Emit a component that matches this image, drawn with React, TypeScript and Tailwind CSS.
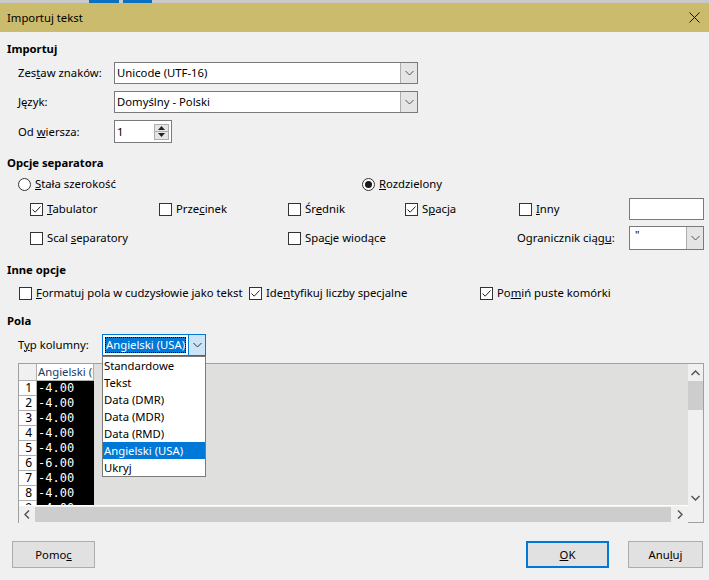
import React from "react";

function Check({ checked }: { checked?: boolean }) {
  return (
    <span className="w-[13px] h-[13px] shrink-0 border border-[#333333] bg-white flex items-center justify-center">
      {checked && (
        <svg width="11" height="11" viewBox="0 0 11 11">
          <path d="M1.5 5.5 L4.2 8.2 L9.5 2.5" stroke="#222" strokeWidth="1" fill="none" />
        </svg>
      )}
    </span>
  );
}

function Radio({ checked }: { checked?: boolean }) {
  return (
    <span className="w-[13px] h-[13px] shrink-0 rounded-full border border-[#333333] bg-white flex items-center justify-center">
      {checked && <span className="w-[7px] h-[7px] rounded-full bg-[#1a1a1a]" />}
    </span>
  );
}

function Chevron({ color = "#555" }: { color?: string }) {
  return (
    <svg width="9" height="6" viewBox="0 0 9 6">
      <path d="M0.5 1 L4.5 5 L8.5 1" stroke={color} strokeWidth="1" fill="none" />
    </svg>
  );
}

function Combo({ text, width }: { text: string; width: string }) {
  return (
    <div className={`${width} h-[22px] flex border border-[#7a7a7a] bg-white`}>
      <div className="flex-1 flex items-center pl-[2px] text-black">{text}</div>
      <div className="w-[17px] bg-[#e5e5e5] border-l border-[#adadad] flex items-center justify-center">
        <Chevron />
      </div>
    </div>
  );
}

function Item({ children, checked, className = "" }: { children: React.ReactNode; checked?: boolean; className?: string }) {
  return (
    <div className={`flex items-center gap-[4px] ${className}`}>
      <Check checked={checked} />
      <span>{children}</span>
    </div>
  );
}

function Button({ children, w, primary }: { children: React.ReactNode; w: string; primary?: boolean }) {
  return (
    <div
      className={`${w} h-[27px] flex items-center justify-center bg-[#e1e1e1] ${
        primary ? "border-2 border-[#0078d7]" : "border border-[#adadad]"
      }`}
    >
      {children}
    </div>
  );
}

const rows = ["-4.00", "-4.00", "-4.00", "-4.00", "-4.00", "-6.00", "-4.00", "-4.00", "-4.00"];
const types = ["Standardowe", "Tekst", "Data (DMR)", "Data (MDR)", "Data (RMD)", "Angielski (USA)", "Ukryj"];

export default function App() {
  return (
    <div className="relative w-[709px] h-[580px] overflow-hidden whitespace-nowrap bg-[#f0f0f0] text-[11.3px] leading-[16px] text-black font-['Noto_Sans',sans-serif]">
      {/* pasek okna pod spodem */}
      <div className="h-[3px] flex bg-[#c9c9c9]">
        <div className="w-[89px]" />
        <div className="w-[30px] bg-[#0a70c0]" />
        <div className="w-[4px]" />
        <div className="w-[29px] bg-[#0a70c0]" />
      </div>

      {/* tytuł */}
      <div className="h-[29px] bg-[#cbbb6c] flex items-center justify-between pl-[7px] pr-[9px]">
        <span>Importuj tekst</span>
        <svg width="11" height="11" viewBox="0 0 11 11">
          <path d="M0.5 0.5 L10.5 10.5 M10.5 0.5 L0.5 10.5" stroke="#111" strokeWidth="1" />
        </svg>
      </div>

      <div className="flex flex-col">
        {/* ── Importuj ───────────────────────── */}
        <div className="mt-[9px] h-[16px] pl-[7px] flex items-center font-bold">Importuj</div>

        <div className="mt-[5px] h-[22px] flex items-center pl-[18px]">
          <span className="w-[96px]">Zes<u>t</u>aw znaków:</span>
          <Combo text="Unicode (UTF-16)" width="w-[304px]" />
        </div>
        <div className="mt-[7px] h-[22px] flex items-center pl-[18px]">
          <span className="w-[96px]"><u>J</u>ęzyk:</span>
          <Combo text="Domyślny - Polski" width="w-[304px]" />
        </div>
        <div className="mt-[7px] h-[23px] flex items-center pl-[18px]">
          <span className="w-[96px]">Od <u>w</u>iersza:</span>
          <div className="w-[58px] h-[23px] flex items-center border border-[#7a7a7a] bg-white">
            <span className="flex-1 pl-[2px]">1</span>
            <div className="w-[15px] h-[16px] mr-[2px] flex flex-col border border-[#adadad] bg-[#e5e5e5]">
              <div className="flex-1 flex items-center justify-center border-b border-[#adadad]">
                <svg width="7" height="4" viewBox="0 0 7 4"><path d="M3.5 0 L7 4 L0 4 Z" fill="#222" /></svg>
              </div>
              <div className="flex-1 flex items-center justify-center">
                <svg width="7" height="4" viewBox="0 0 7 4"><path d="M0 0 L7 0 L3.5 4 Z" fill="#222" /></svg>
              </div>
            </div>
          </div>
        </div>

        {/* ── Opcje separatora ───────────────── */}
        <div className="mt-[12px] h-[16px] pl-[7px] flex items-center font-bold">Opcje separatora</div>
        <div className="mt-[5px] h-[16px] flex items-center pl-[18px]">
          <div className="w-[344px] flex items-center gap-[4px]">
            <Radio />
            <span><u>S</u>tała szerokość</span>
          </div>
          <div className="flex items-center gap-[4px]">
            <Radio checked />
            <span><u>R</u>ozdzielony</span>
          </div>
        </div>

        <div className="mt-[6px] h-[22px] pl-[30px] grid grid-cols-[129px_129px_117px_114px_110px_75px] items-center">
          <Item checked><u>T</u>abulator</Item>
          <Item>Prze<u>c</u>inek</Item>
          <Item>Śr<u>e</u>dnik</Item>
          <Item checked>S<u>p</u>acja</Item>
          <Item><u>I</u>nny</Item>
          <div className="h-[22px] border border-[#7a7a7a] bg-white" />
        </div>
        <div className="mt-[6px] h-[24px] pl-[30px] grid grid-cols-[129px_129px_117px_114px_110px_75px] items-center">
          <Item>Scal <u>s</u>eparatory</Item>
          <div />
          <Item>Spa<u>c</u>je wiodące</Item>
          <div />
          <span className="-ml-[2px]">Ogranicznik ciąg<u>u</u>:</span>
          <div className="h-[24px] flex border border-[#7a7a7a] bg-white">
            <div className="flex-1 pl-[5px] pt-[1px] text-[11px] leading-[14px]">"</div>
            <div className="w-[17px] bg-[#e5e5e5] border-l border-[#adadad] flex items-center justify-center">
              <Chevron />
            </div>
          </div>
        </div>

        {/* ── Inne opcje ─────────────────────── */}
        <div className="mt-[12px] h-[16px] pl-[7px] flex items-center font-bold">Inne opcje</div>
        <div className="mt-[7px] h-[16px] pl-[19px] flex items-center">
          <Item className="w-[230px] gap-[3px]"><u>F</u>ormatuj pola w cudzysłowie jako tekst</Item>
          <Item checked className="w-[231px] gap-[3px]">Ide<u>n</u>tyfikuj liczby specjalne</Item>
          <Item checked className="gap-[3px]">Po<u>m</u>iń puste komórki</Item>
        </div>

        {/* ── Pola ───────────────────────────── */}
        <div className="mt-[12px] h-[16px] pl-[7px] flex items-center font-bold">Pola</div>
        <div className="mt-[5px] h-[22px] pl-[18px] flex items-center">
          <span className="w-[84px]">T<u>y</u>p kolumny:</span>
          <div className="w-[104px] h-[22px] flex border border-[#0078d7] bg-white">
            <div className="flex-1 p-[2px] flex overflow-hidden">
              <div className="flex-1 flex items-center pl-[1px] bg-[#0078d7] text-white outline-1 outline-dotted outline-black -outline-offset-1">
                Angielski (USA)
              </div>
            </div>
            <div className="w-[17px] bg-[#cce4f7] border-l border-[#0078d7] flex items-center justify-center">
              <Chevron color="#333" />
            </div>
          </div>
        </div>

        {/* ── tabela podglądu ───────────────── */}
        <div className="mt-[7px] ml-[18px] w-[686px] h-[160px] flex border-t border-l border-r border-[#a0a0a0]">
          <div className="flex-1 flex flex-col">
            <div className="h-[141px] bg-[#dfdfde] overflow-hidden">
              <div className="flex h-[17px]">
                <div className="w-[18px] bg-[#f0f0f0] border-r border-b border-[#b0b0b0]" />
                <div className="w-[57px] bg-white border-r border-b border-[#b0b0b0] overflow-hidden pl-[1px] leading-[16px] text-[#1a3a6a]">
                  Angielski (USA)
                </div>
              </div>
              {rows.map((v, i) => (
                <div key={i} className="flex h-[15px]">
                  <div className="w-[18px] bg-white border-r border-b border-[#b0b0b0] flex items-end justify-end pr-[4px] text-[12px] leading-[14px]">
                    {i + 1}
                  </div>
                  <div className="w-[57px] bg-black text-white pl-[1px] font-['DejaVu_Sans_Mono',monospace] text-[12px] leading-[15px]">
                    {v}
                  </div>
                </div>
              ))}
            </div>
            <div className="h-[1px] bg-white" />
            <div className="h-[16px] flex items-center">
              <div className="w-[16px] flex items-center justify-center">
                <svg width="6" height="9" viewBox="0 0 6 9"><path d="M5 0.5 L1 4.5 L5 8.5" stroke="#555" strokeWidth="1.5" fill="none" /></svg>
              </div>
              <div className="flex-1 h-[15px] bg-[#cdcdcd]" />
              <div className="w-[17px] flex items-center justify-center">
                <svg width="6" height="9" viewBox="0 0 6 9"><path d="M1 0.5 L5 4.5 L1 8.5" stroke="#555" strokeWidth="1.5" fill="none" /></svg>
              </div>
            </div>
          </div>
          <div className="w-[15px] flex flex-col">
            <div className="h-[142px] flex flex-col bg-[#f0f0f0]">
              <div className="h-[17px] flex items-center justify-center">
                <svg width="9" height="6" viewBox="0 0 9 6"><path d="M0.5 5 L4.5 1 L8.5 5" stroke="#555" strokeWidth="1.5" fill="none" /></svg>
              </div>
              <div className="h-[29px] bg-[#cdcdcd]" />
              <div className="flex-1" />
              <div className="h-[17px] flex items-center justify-center">
                <svg width="9" height="6" viewBox="0 0 9 6"><path d="M0.5 1 L4.5 5 L8.5 1" stroke="#555" strokeWidth="1.5" fill="none" /></svg>
              </div>
            </div>
            <div className="flex-1 border-b border-[#a0a0a0]" />
          </div>
        </div>

        {/* ── przyciski ─────────────────────── */}
        <div className="mt-[18px] h-[27px] pl-[12px] pr-[6px] flex items-center">
          <Button w="w-[83px]">Pomo<u>c</u></Button>
          <div className="flex-1" />
          <Button w="w-[83px]" primary><u>O</u>K</Button>
          <div className="w-[19px]" />
          <Button w="w-[75px]">Anu<u>l</u>uj</Button>
        </div>
      </div>

      {/* rozwinięta lista typu kolumny */}
      <div className="absolute left-[102px] top-[356px] w-[104px] h-[121px] bg-white border border-[#7a7a7a] flex flex-col">
        {types.map((t) => (
          <div
            key={t}
            className={`h-[17px] pl-[1px] flex items-center ${t === "Angielski (USA)" ? "bg-[#0078d7] text-white" : ""}`}
          >
            {t}
          </div>
        ))}
      </div>
    </div>
  );
}
